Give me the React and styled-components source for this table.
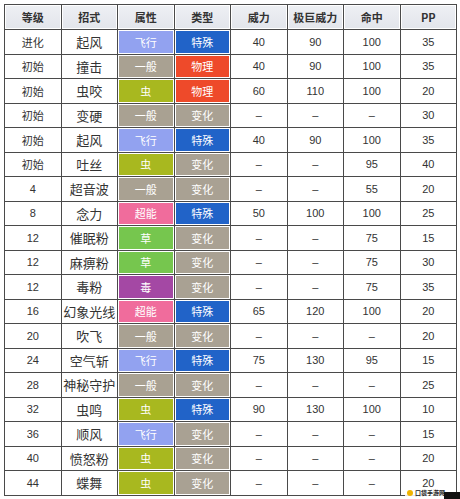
import styled, { createGlobalStyle } from "styled-components";

const Global = createGlobalStyle`
  html, body {
    margin: 0;
    padding: 0;
    background: #fff;
  }
  body {
    font-family: "Liberation Sans", "Noto Sans CJK SC", sans-serif;
  }
`;

const Page = styled.div`
  position: relative;
  width: 460px;
  height: 499px;
  padding: 4px 0 0 4px;
  box-sizing: border-box;
  overflow: hidden;
`;

// dark background + 1px gaps = grid lines
const Grid = styled.div`
  width: 453px;
  display: grid;
  grid-template-columns: repeat(8, 1fr);
  grid-template-rows: 24px repeat(19, 23.5px);
  gap: 1px;
  background: #4a4a4a;
  border: 1px solid #4a4a4a;
  box-sizing: border-box;
`;

const HeadCell = styled.div`
  display: flex;
  align-items: center;
  justify-content: center;
  background: linear-gradient(#eef0f4, #e2e5eb);
  box-shadow: inset 0 0 0 1px #fff;
  color: #333;
  font-family: "Noto Sans CJK SC", sans-serif;
  font-weight: bold;
  font-size: 11px;
`;

const Cell = styled.div`
  display: flex;
  align-items: center;
  justify-content: center;
  white-space: nowrap;
  overflow: hidden;
  background: #fff;
  color: #333;
  font-family: "Liberation Sans", "Noto Sans CJK SC", sans-serif;
  font-size: ${(props) => (props.big ? "13px" : "11px")};
`;

const TypeCell = styled(Cell)`
  background: ${(props) => props.bg};
  box-shadow: inset 0 0 0 1px #fff;
  color: #fff;
  font-size: 11px;
  font-family: "Noto Sans CJK SC", sans-serif;
`;

const Watermark = styled.div`
  position: absolute;
  left: 405px;
  top: 489px;
  display: flex;
  align-items: center;
  gap: 2px;
  font-family: "Noto Sans CJK SC", sans-serif;
  font-size: 6px;
  line-height: 8px;
  font-weight: bold;
  color: #222;
  background: rgba(255, 255, 255, 0.85);
  padding: 0 2px;
`;

const Dot = styled.span`
  width: 6px;
  height: 6px;
  border-radius: 50%;
  background: #f0b400;
`;

const BlackCorner = styled.div`
  position: absolute;
  right: 0;
  bottom: 0;
  width: 16px;
  height: 7px;
  background: #111;
`;

const colors = {
  飞行: "#92a2f0",
  一般: "#a9a192",
  虫: "#a8b81f",
  超能: "#f06c9c",
  草: "#76c64e",
  毒: "#a448a4",
  特殊: "#2163c8",
  物理: "#ee4a2a",
  变化: "#a9a193",
};

const headers = ["等级", "招式", "属性", "类型", "威力", "极巨威力", "命中", "PP"];

const rows = [
  ["进化", "起风", "飞行", "特殊", "40", "90", "100", "35"],
  ["初始", "撞击", "一般", "物理", "40", "90", "100", "35"],
  ["初始", "虫咬", "虫", "物理", "60", "110", "100", "20"],
  ["初始", "变硬", "一般", "变化", "–", "–", "–", "30"],
  ["初始", "起风", "飞行", "特殊", "40", "90", "100", "35"],
  ["初始", "吐丝", "虫", "变化", "–", "–", "95", "40"],
  ["4", "超音波", "一般", "变化", "–", "–", "55", "20"],
  ["8", "念力", "超能", "特殊", "50", "100", "100", "25"],
  ["12", "催眠粉", "草", "变化", "–", "–", "75", "15"],
  ["12", "麻痹粉", "草", "变化", "–", "–", "75", "30"],
  ["12", "毒粉", "毒", "变化", "–", "–", "75", "35"],
  ["16", "幻象光线", "超能", "特殊", "65", "120", "100", "20"],
  ["20", "吹飞", "一般", "变化", "–", "–", "–", "20"],
  ["24", "空气斩", "飞行", "特殊", "75", "130", "95", "15"],
  ["28", "神秘守护", "一般", "变化", "–", "–", "–", "25"],
  ["32", "虫鸣", "虫", "特殊", "90", "130", "100", "10"],
  ["36", "顺风", "飞行", "变化", "–", "–", "–", "15"],
  ["40", "愤怒粉", "虫", "变化", "–", "–", "–", "20"],
  ["44", "蝶舞", "虫", "变化", "–", "–", "–", "20"],
];

function App() {
  return (
    <Page>
      <Global />
      <Grid>
        {headers.map((h) => (
          <HeadCell key={h}>{h}</HeadCell>
        ))}
        {rows.map((r, i) =>
          r.map((v, j) =>
            j === 2 || j === 3 ? (
              <TypeCell key={i + "-" + j} bg={colors[v]}>
                {v}
              </TypeCell>
            ) : (
              <Cell key={i + "-" + j} big={j === 1}>
                {v}
              </Cell>
            )
          )
        )}
      </Grid>
      <Watermark>
        <Dot />
        口袋手游网
      </Watermark>
      <BlackCorner />
    </Page>
  );
}

export default App;
